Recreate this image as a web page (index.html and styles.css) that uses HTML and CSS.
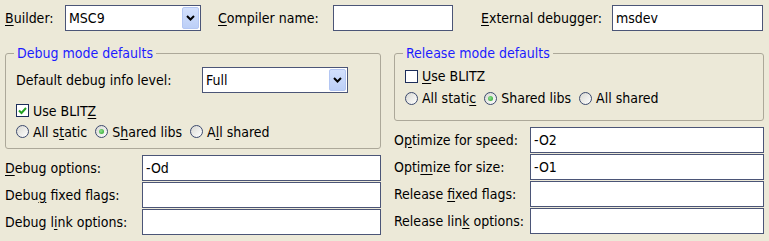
FILE: index.html
```html
<!DOCTYPE html>
<html lang="en">
<head>
  <meta charset="UTF-8">
  <title>Build settings</title>
  <link rel="stylesheet" href="styles.css">
</head>
<body>

<div class="dlg">

  <!-- builder / compiler / debugger -->
  <div class="toprow">
    <label class="lbl-builder"><u>B</u>uilder:</label>
    <div class="combo combo-builder">
      <span class="combo-text">MSC9</span>
      <span class="combo-btn"><svg width="9" height="6" viewBox="0 0 9 6"><path d="M1 1 L4.5 4.5 L8 1" fill="none" stroke="#000" stroke-width="2"/></svg></span>
    </div>
    <label class="lbl-compiler"><u>C</u>ompiler name:</label>
    <input class="field field-compiler" type="text" value="">
    <label class="lbl-debugger"><u>E</u>xternal debugger:</label>
    <input class="field field-debugger" type="text" value="msdev">
  </div>

  <div class="columns">

    <!-- debug column -->
    <div class="col col-left">
      <fieldset class="group group-debug">
        <legend>Debug mode defaults</legend>
        <div class="levelrow">
          <label class="lbl-level">Default debug info level:</label>
          <div class="combo combo-level">
            <span class="combo-text">Full</span>
            <span class="combo-btn"><svg width="9" height="6" viewBox="0 0 9 6"><path d="M1 1 L4.5 4.5 L8 1" fill="none" stroke="#000" stroke-width="2"/></svg></span>
          </div>
        </div>
        <div class="optrow">
          <span class="check checked"><svg width="9" height="8" viewBox="0 0 9 8"><path d="M1 3.5 L3.5 6 L8 1" fill="none" stroke="#21a121" stroke-width="2"/></svg></span>
          <span class="opt-text">Use BLIT<u>Z</u></span>
        </div>
        <div class="optrow radios">
          <span class="radio"></span><span class="opt-text">All s<u>t</u>atic</span>
          <span class="radio on"></span><span class="opt-text">S<u>h</u>ared libs</span>
          <span class="radio"></span><span class="opt-text">A<u>l</u>l shared</span>
        </div>
      </fieldset>

      <div class="formrow">
        <label><u>D</u>ebug options:</label>
        <input class="field" type="text" value="-Od">
      </div>
      <div class="formrow">
        <label>Debu<u>g</u> fixed flags:</label>
        <input class="field" type="text" value="">
      </div>
      <div class="formrow">
        <label>Debug l<u>i</u>nk options:</label>
        <input class="field" type="text" value="">
      </div>
    </div>

    <!-- release column -->
    <div class="col col-right">
      <fieldset class="group group-release">
        <legend>Release mode defaults</legend>
        <div class="optrow">
          <span class="check"></span>
          <span class="opt-text"><u>U</u>se BLITZ</span>
        </div>
        <div class="optrow radios">
          <span class="radio"></span><span class="opt-text">All stati<u>c</u></span>
          <span class="radio on"></span><span class="opt-text">Shared libs</span>
          <span class="radio"></span><span class="opt-text">All shared</span>
        </div>
      </fieldset>

      <div class="formrow">
        <label>O<u>p</u>timize for speed:</label>
        <input class="field" type="text" value="-O2">
      </div>
      <div class="formrow">
        <label>Opti<u>m</u>ize for size:</label>
        <input class="field" type="text" value="-O1">
      </div>
      <div class="formrow">
        <label>Release <u>f</u>ixed flags:</label>
        <input class="field" type="text" value="">
      </div>
      <div class="formrow">
        <label>Release lin<u>k</u> options:</label>
        <input class="field" type="text" value="">
      </div>
    </div>

  </div>
</div>

</body>
</html>
```

FILE: styles.css
```css
body {
  margin: 0;
  background-color: #ece9d8;
  font-family: "DejaVu Sans Condensed", "Liberation Sans", sans-serif;
  font-stretch: condensed;
  font-size: 14px;
  color: #000;
}
.dlg {
  padding: 5px 5px 0 5px;
}
u {
  text-decoration: underline;
  text-underline-offset: 2px;
}

/* top row */
.toprow {
  display: flex;
  align-items: center;
  height: 26px;
}
.lbl-builder {
  width: 60px;
}
.lbl-compiler {
  margin-left: 17px;
  width: 115px;
}
.lbl-debugger {
  margin-left: 28px;
  width: 131px;
}
.field {
  box-sizing: border-box;
  height: 26px;
  margin: 0;
  border: 1px solid #4b5577;
  background: #fff;
  padding: 0 3px;
  font: inherit;
  color: #000;
  outline: none;
}
.field-compiler {
  width: 120px;
}
.field-debugger {
  width: 151px;
}

/* combo box */
.combo {
  box-sizing: border-box;
  height: 26px;
  border: 1px solid #4b5577;
  background: #fff;
  display: flex;
  align-items: center;
  justify-content: space-between;
  padding: 1px 1px 1px 3px;
}
.combo-builder {
  width: 136px;
}
.combo-level {
  width: 146px;
}
.combo-btn {
  box-sizing: border-box;
  width: 17px;
  height: 22px;
  border: 1px solid #b3c6f3;
  border-radius: 2px;
  background: linear-gradient(#d3e0fc, #bccff7);
  display: flex;
  align-items: center;
  justify-content: center;
}

/* columns */
.columns {
  display: grid;
  grid-template-columns: 376px 370px;
  column-gap: 13px;
  margin-top: 15px;
}
.col {
  display: flex;
  flex-direction: column;
}

/* group boxes */
.group {
  margin: 0;
  border: 1px solid #aca899;
  border-radius: 3px;
  padding: 0 10px;
}
.group legend {
  color: #1c1cff;
  line-height: 14px;
  padding: 0 3px;
  margin-left: -2px;
}
.group-debug {
  padding-top: 7px;
  padding-bottom: 6px;
}
.group-release {
  padding-top: 5px;
  padding-bottom: 11px;
}
.levelrow {
  display: flex;
  align-items: center;
  margin-bottom: 7px;
}
.lbl-level {
  width: 186px;
}
.optrow {
  display: flex;
  align-items: center;
  height: 21px;
}
.group-release .optrow {
  height: 22px;
}
.opt-text {
  margin-left: 4px;
  margin-right: 8px;
}
.check {
  box-sizing: border-box;
  width: 13px;
  height: 13px;
  border: 1px solid #1c2d5a;
  background: #fff;
  display: flex;
  align-items: center;
  justify-content: center;
}
.radio {
  box-sizing: border-box;
  width: 13px;
  height: 13px;
  border: 1px solid #3c4a6e;
  border-radius: 50%;
  background: linear-gradient(135deg, #d8d8d2, #fff);
  position: relative;
}
.radio.on::after {
  content: "";
  position: absolute;
  left: 3px;
  top: 3px;
  width: 5px;
  height: 5px;
  border-radius: 50%;
  background: radial-gradient(circle at 40% 40%, #8fe08f, #21a121);
}

/* label + field rows */
.formrow {
  display: flex;
  align-items: center;
  margin-top: 1px;
}
.group + .formrow {
  margin-top: 6px;
}
.col-left .formrow label {
  width: 137px;
}
.col-left .formrow .field {
  width: 239px;
}
.col-right .formrow label {
  width: 136px;
}
.col-right .formrow .field {
  width: 234px;
}
```
